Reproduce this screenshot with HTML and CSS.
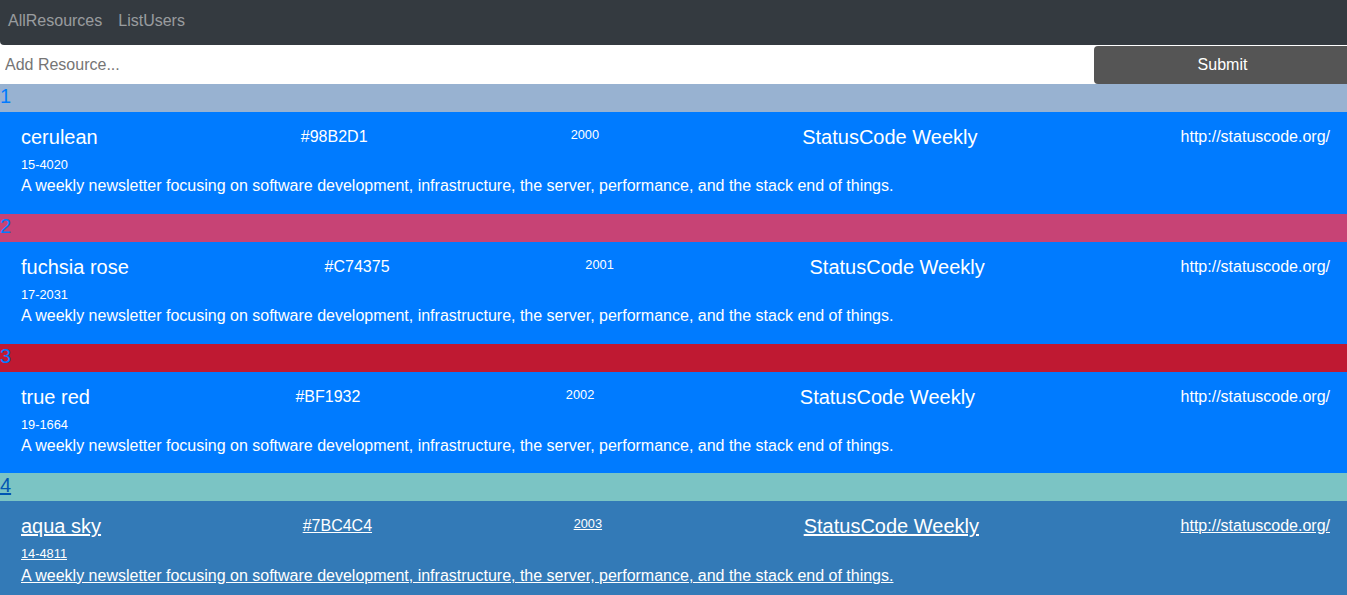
FILE: index.html
```html
<!DOCTYPE html>
<html>
<head>
<meta charset="utf-8">
<link rel="stylesheet" href="styles.css">
</head>
<body>
<nav class="navbar">
  <a class="nav-link" href="#">AllResources</a>
  <a class="nav-link" href="#">ListUsers</a>
</nav>
<form class="add-form">
  <input class="add-input" type="text" placeholder="Add Resource...">
  <button class="add-btn" type="button">Submit</button>
</form>
<div class="list">
  <a class="item" href="#">
    <div class="item-head" style="background:#98B2D1">1</div>
    <div class="item-body">
      <div class="item-row">
        <span class="name">cerulean</span>
        <span class="hex">#98B2D1</span>
        <small class="year">2000</small>
        <span class="title">StatusCode Weekly</span>
        <span class="url">http://statuscode.org/</span>
      </div>
      <small class="code">15-4020</small>
      <p class="desc">A weekly newsletter focusing on software development, infrastructure, the server, performance, and the stack end of things.</p>
    </div>
  </a>
  <a class="item" href="#">
    <div class="item-head" style="background:#C74375">2</div>
    <div class="item-body">
      <div class="item-row">
        <span class="name">fuchsia rose</span>
        <span class="hex">#C74375</span>
        <small class="year">2001</small>
        <span class="title">StatusCode Weekly</span>
        <span class="url">http://statuscode.org/</span>
      </div>
      <small class="code">17-2031</small>
      <p class="desc">A weekly newsletter focusing on software development, infrastructure, the server, performance, and the stack end of things.</p>
    </div>
  </a>
  <a class="item" href="#">
    <div class="item-head" style="background:#BF1932">3</div>
    <div class="item-body">
      <div class="item-row">
        <span class="name">true red</span>
        <span class="hex">#BF1932</span>
        <small class="year">2002</small>
        <span class="title">StatusCode Weekly</span>
        <span class="url">http://statuscode.org/</span>
      </div>
      <small class="code">19-1664</small>
      <p class="desc">A weekly newsletter focusing on software development, infrastructure, the server, performance, and the stack end of things.</p>
    </div>
  </a>
  <a class="item item-hover" href="#">
    <div class="item-head" style="background:#7BC4C4">4</div>
    <div class="item-body">
      <div class="item-row">
        <span class="name">aqua sky</span>
        <span class="hex">#7BC4C4</span>
        <small class="year">2003</small>
        <span class="title">StatusCode Weekly</span>
        <span class="url">http://statuscode.org/</span>
      </div>
      <small class="code">14-4811</small>
      <p class="desc">A weekly newsletter focusing on software development, infrastructure, the server, performance, and the stack end of things.</p>
    </div>
  </a>
</div>
</body>
</html>
```

FILE: styles.css
```css
* { box-sizing: border-box; }
html, body {
  margin: 0;
  padding: 0;
  font-family: "Liberation Sans", Arial, sans-serif;
  font-size: 16px;
  line-height: 1.5;
  color: #212529;
  background: #fff;
}
.navbar {
  display: flex;
  align-items: center;
  height: 45px;
  background: #343a40;
  border-radius: 0 0 0 4px;
  padding: 0 0 0 8px;
  gap: 16px;
}
.nav-link {
  color: rgba(255, 255, 255, 0.5);
  text-decoration: none;
  font-size: 16px;
  line-height: 24px;
  margin-top: -4px;
}
.add-form {
  display: flex;
  margin: 1px 0 0 0;
  height: 38px;
}
.add-input {
  flex: 1;
  border: none;
  outline: none;
  padding: 0 5px;
  font-family: "Liberation Sans", Arial, sans-serif;
  font-size: 16px;
  color: #495057;
  background: #fff;
}
.add-input::placeholder { color: #757575; }
.add-btn {
  width: 253px;
  border: none;
  background: #555555;
  color: #fff;
  font-family: "Liberation Sans", Arial, sans-serif;
  font-size: 16px;
  border-radius: 4px 0 0 4px;
  padding: 0 0 0 4px;
}
.list { display: flex; flex-direction: column; }
.item {
  display: block;
  text-decoration: none;
  color: #fff;
}
.item-head {
  height: 28px;
  font-size: 20px;
  line-height: 24px;
  color: #007bff;
  padding: 0;
}
.item-body {
  background: #007bff;
  padding: 13px 17px 0 21px;
  height: 101.8px;
}
.item-row {
  display: flex;
  justify-content: space-between;
  align-items: flex-start;
  height: 30px;
}
.name, .title {
  font-size: 20px;
  line-height: 24px;
}
.hex, .url {
  font-size: 16px;
  line-height: 24px;
}
.year, .code {
  font-size: 12.8px;
  line-height: 19.2px;
}
.code { display: block; }
.desc {
  margin: 0;
  font-size: 16px;
  line-height: 24px;
}
.item-hover .item-head {
  color: #0056b3;
  text-decoration: underline;
}
.item-hover .item-body { background: #337ab7; }
.item-hover .item-body span,
.item-hover .item-body small,
.item-hover .item-body p { text-decoration: underline; }
```
